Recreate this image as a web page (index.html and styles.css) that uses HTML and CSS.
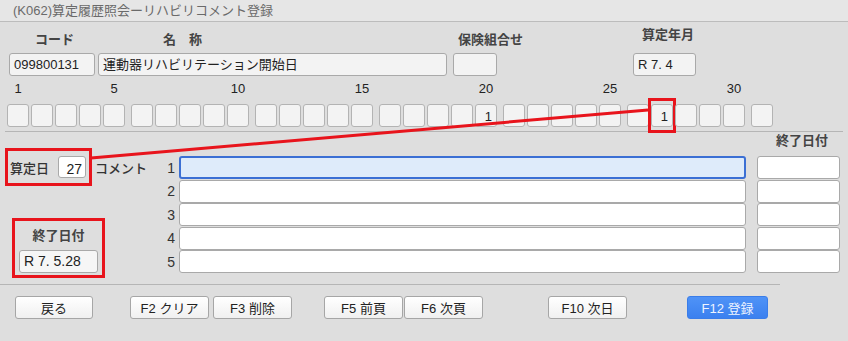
FILE: index.html
```html
<!DOCTYPE html>
<html lang="ja">
<head>
    <meta charset="UTF-8">
    <title>(K062)算定履歴照会ーリハビリコメント登録</title>
    <link rel="stylesheet" href="styles.css">
</head>
<body>
<div class="window">
    <div class="titlebar">(K062)算定履歴照会ーリハビリコメント登録</div>

    <div class="header">
        <div class="field f-code">
            <label class="head-label">コード</label>
            <div class="input">099800131</div>
        </div>
        <div class="field f-name">
            <label class="head-label">名　称</label>
            <div class="input">運動器リハビリテーション開始日</div>
        </div>
        <div class="field f-ins">
            <label class="head-label">保険組合せ</label>
            <div class="input"></div>
        </div>
        <div class="field f-month">
            <label class="head-label">算定年月</label>
            <div class="input">R 7. 4</div>
        </div>
    </div>

    <div class="days">
        <div class="group">
            <div class="day"><span class="num">1</span><div class="box"></div></div>
            <div class="day"><span class="num"></span><div class="box"></div></div>
            <div class="day"><span class="num"></span><div class="box"></div></div>
            <div class="day"><span class="num"></span><div class="box"></div></div>
            <div class="day"><span class="num">5</span><div class="box"></div></div>
        </div>
        <div class="group">
            <div class="day"><span class="num"></span><div class="box"></div></div>
            <div class="day"><span class="num"></span><div class="box"></div></div>
            <div class="day"><span class="num"></span><div class="box"></div></div>
            <div class="day"><span class="num"></span><div class="box"></div></div>
            <div class="day"><span class="num">10</span><div class="box"></div></div>
        </div>
        <div class="group">
            <div class="day"><span class="num"></span><div class="box"></div></div>
            <div class="day"><span class="num"></span><div class="box"></div></div>
            <div class="day"><span class="num"></span><div class="box"></div></div>
            <div class="day"><span class="num"></span><div class="box"></div></div>
            <div class="day"><span class="num">15</span><div class="box"></div></div>
        </div>
        <div class="group">
            <div class="day"><span class="num"></span><div class="box"></div></div>
            <div class="day"><span class="num"></span><div class="box"></div></div>
            <div class="day"><span class="num"></span><div class="box"></div></div>
            <div class="day"><span class="num"></span><div class="box"></div></div>
            <div class="day"><span class="num">20</span><div class="box">1</div></div>
        </div>
        <div class="group">
            <div class="day"><span class="num"></span><div class="box"></div></div>
            <div class="day"><span class="num"></span><div class="box"></div></div>
            <div class="day"><span class="num"></span><div class="box"></div></div>
            <div class="day"><span class="num"></span><div class="box"></div></div>
            <div class="day"><span class="num">25</span><div class="box"></div></div>
        </div>
        <div class="group">
            <div class="day"><span class="num"></span><div class="box"></div></div>
            <div class="day"><span class="num"></span><div class="box marked">1</div></div>
            <div class="day"><span class="num"></span><div class="box"></div></div>
            <div class="day"><span class="num"></span><div class="box"></div></div>
            <div class="day"><span class="num">30</span><div class="box"></div></div>
        </div>
        <div class="group">
            <div class="day"><span class="num"></span><div class="box"></div></div>
        </div>
    </div>

    <div class="main">
        <div class="side">
            <div class="calc-box">
                <span class="plain-label">算定日</span>
                <div class="input white day-input">27</div>
            </div>
            <div class="end-box">
                <label class="head-label">終了日付</label>
                <div class="input end-input">R 7. 5.28</div>
            </div>
        </div>

        <div class="comments">
            <div class="comments-head">
                <label class="head-label">終了日付</label>
            </div>
            <div class="row">
                <span class="cmt-label">コメント</span>
                <span class="no">1</span>
                <div class="input white comment focused"></div>
                <div class="input white end-date"></div>
            </div>
            <div class="row">
                <span class="cmt-label"></span>
                <span class="no">2</span>
                <div class="input white comment"></div>
                <div class="input white end-date"></div>
            </div>
            <div class="row">
                <span class="cmt-label"></span>
                <span class="no">3</span>
                <div class="input white comment"></div>
                <div class="input white end-date"></div>
            </div>
            <div class="row">
                <span class="cmt-label"></span>
                <span class="no">4</span>
                <div class="input white comment"></div>
                <div class="input white end-date"></div>
            </div>
            <div class="row">
                <span class="cmt-label"></span>
                <span class="no">5</span>
                <div class="input white comment"></div>
                <div class="input white end-date"></div>
            </div>
        </div>
    </div>

    <div class="buttons">
        <button class="btn b-back">戻る</button>
        <button class="btn b-f2">F2 クリア</button>
        <button class="btn b-f3">F3 削除</button>
        <button class="btn b-f5">F5 前頁</button>
        <button class="btn b-f6">F6 次頁</button>
        <button class="btn b-f10">F10 次日</button>
        <button class="btn primary b-f12">F12 登録</button>
    </div>

    <!-- annotation line from 算定日 to the marked day -->
    <svg class="overlay" width="848" height="341" viewBox="0 0 848 341">
        <line x1="91" y1="158" x2="648" y2="110" stroke="#e8141c" stroke-width="3"/>
    </svg>
</div>
</body>
</html>
```

FILE: styles.css
```css
body {
    margin: 0;
    background-color: #dedede;
    font-family: "Liberation Sans", "Noto Sans CJK JP", sans-serif;
    font-size: 13px;
    color: #222;
}

.window {
    position: relative;
    width: 848px;
    height: 341px;
    overflow: hidden;
    background-color: #dedede;
}

.titlebar {
    height: 21px;
    line-height: 21px;
    padding-left: 13px;
    color: #6a6a6a;
    background-color: #e6e6e6;
    border-bottom: 1px solid #bcbcbc;
}

.head-label {
    display: block;
    height: 16px;
    line-height: 16px;
    font-weight: bold;
    color: #444;
    white-space: nowrap;
}

.input {
    box-sizing: border-box;
    height: 23px;
    line-height: 21px;
    padding: 0 4px;
    background-color: #f3f3f3;
    border: 1px solid #a9a9a9;
    border-radius: 3px;
    white-space: nowrap;
    overflow: hidden;
}

.input.white {
    background-color: #fff;
}

/* header fields */
.header {
    display: flex;
    align-items: flex-end;
    padding: 5px 0 0 9px;
}

.field .head-label {
    margin-bottom: 5px;
}

.f-code {
    width: 86px;
}

.f-code .head-label {
    padding-left: 26px;
}

.f-name {
    width: 349px;
    margin-left: 3px;
}

.f-name .head-label {
    padding-left: 65px;
}

.f-ins {
    width: 44px;
    margin-left: 6px;
}

.f-ins .head-label {
    padding-left: 5px;
}

.f-month {
    width: 63px;
    margin-left: 136px;
}

.f-month .head-label {
    padding-left: 9px;
    margin-bottom: 10px;
}

/* day boxes */
.days {
    display: flex;
    gap: 6px;
    margin: 0 5px;
    padding: 5px 0 4px 2px;
    border-bottom: 1px solid #b5b5b5;
}

.group {
    display: flex;
    gap: 2px;
}

.day {
    display: flex;
    flex-direction: column;
    width: 22px;
}

.num {
    height: 16px;
    line-height: 16px;
    margin-bottom: 7px;
    text-align: center;
    white-space: nowrap;
    color: #222;
}

.box {
    position: relative;
    box-sizing: border-box;
    height: 23px;
    padding: 1px 4px 0 0;
    line-height: 21px;
    text-align: right;
    background-color: #f3f3f3;
    border: 1px solid #b3b3b3;
    border-radius: 3px;
}

.box.marked::after {
    content: "";
    position: absolute;
    top: -7px;
    bottom: -7px;
    left: -4px;
    right: -4px;
    border: 3px solid #e8141c;
}

/* comments area */
.main {
    display: flex;
    width: 780px;
    height: 153px;
    padding-top: 1px;
    box-sizing: border-box;
    border-bottom: 1px solid #b5b5b5;
}

.side {
    width: 90px;
    flex-shrink: 0;
    margin-left: 5px;
    padding-top: 15px;
}

.calc-box {
    box-sizing: border-box;
    display: flex;
    align-items: center;
    width: 87px;
    height: 38px;
    padding: 0 3px 0 2px;
    border: 3px solid #e8141c;
}

.plain-label {
    font-weight: 500;
    color: #333;
}

.day-input {
    width: 28px;
    height: 22px;
    margin-left: auto;
    text-align: right;
    padding: 2px 3px 0 0;
    font-size: 14px;
}

.end-box {
    box-sizing: border-box;
    display: flex;
    flex-direction: column;
    align-items: center;
    width: 93px;
    height: 60px;
    margin: 32px 0 0 7px;
    padding-top: 7px;
    border: 3px solid #e8141c;
}

.end-box .head-label {
    margin-bottom: 6px;
}

.end-input {
    width: 79px;
    background-color: #f6f6f6;
    font-size: 14px;
}

.comments {
    flex-shrink: 0;
    width: 745px;
}

.comments-head {
    display: flex;
    justify-content: flex-end;
    margin-bottom: 7px;
    padding-right: 12px;
}

.row {
    display: flex;
    align-items: center;
    height: 23px;
    margin-bottom: 0.5px;
}

.cmt-label {
    width: 70px;
    color: #333;
    font-weight: 500;
}

.no {
    width: 10px;
    text-align: right;
    color: #333;
    font-size: 14px;
}

.comment {
    width: 567px;
    margin-left: 4px;
}

.comment.focused {
    border: 2px solid #3b6fd4;
    background-color: #deebfa;
}

.end-date {
    width: 83px;
    margin-left: 11px;
}

/* buttons */
.buttons {
    display: flex;
    padding: 11px 0 0 15px;
}

.btn {
    box-sizing: border-box;
    width: 79px;
    height: 23px;
    padding: 0;
    font-family: inherit;
    font-size: 13px;
    color: #222;
    background: linear-gradient(#ffffff, #f0f0f0);
    border: 1px solid #a6a6a6;
    border-radius: 3px;
}

.btn.primary {
    width: 81px;
    color: #eef4ff;
    background: linear-gradient(#4f93f7, #3b80ef);
    border-color: #3a7de9;
}

.b-back { width: 78px; }
.b-f2 { margin-left: 37px; }
.b-f3 { margin-left: 4px; }
.b-f5 { margin-left: 32px; }
.b-f6 { margin-left: 1px; }
.b-f10 { margin-left: 65px; }
.b-f12 { margin-left: 60px; }

.overlay {
    position: absolute;
    top: 0;
    left: 0;
    pointer-events: none;
}
```
